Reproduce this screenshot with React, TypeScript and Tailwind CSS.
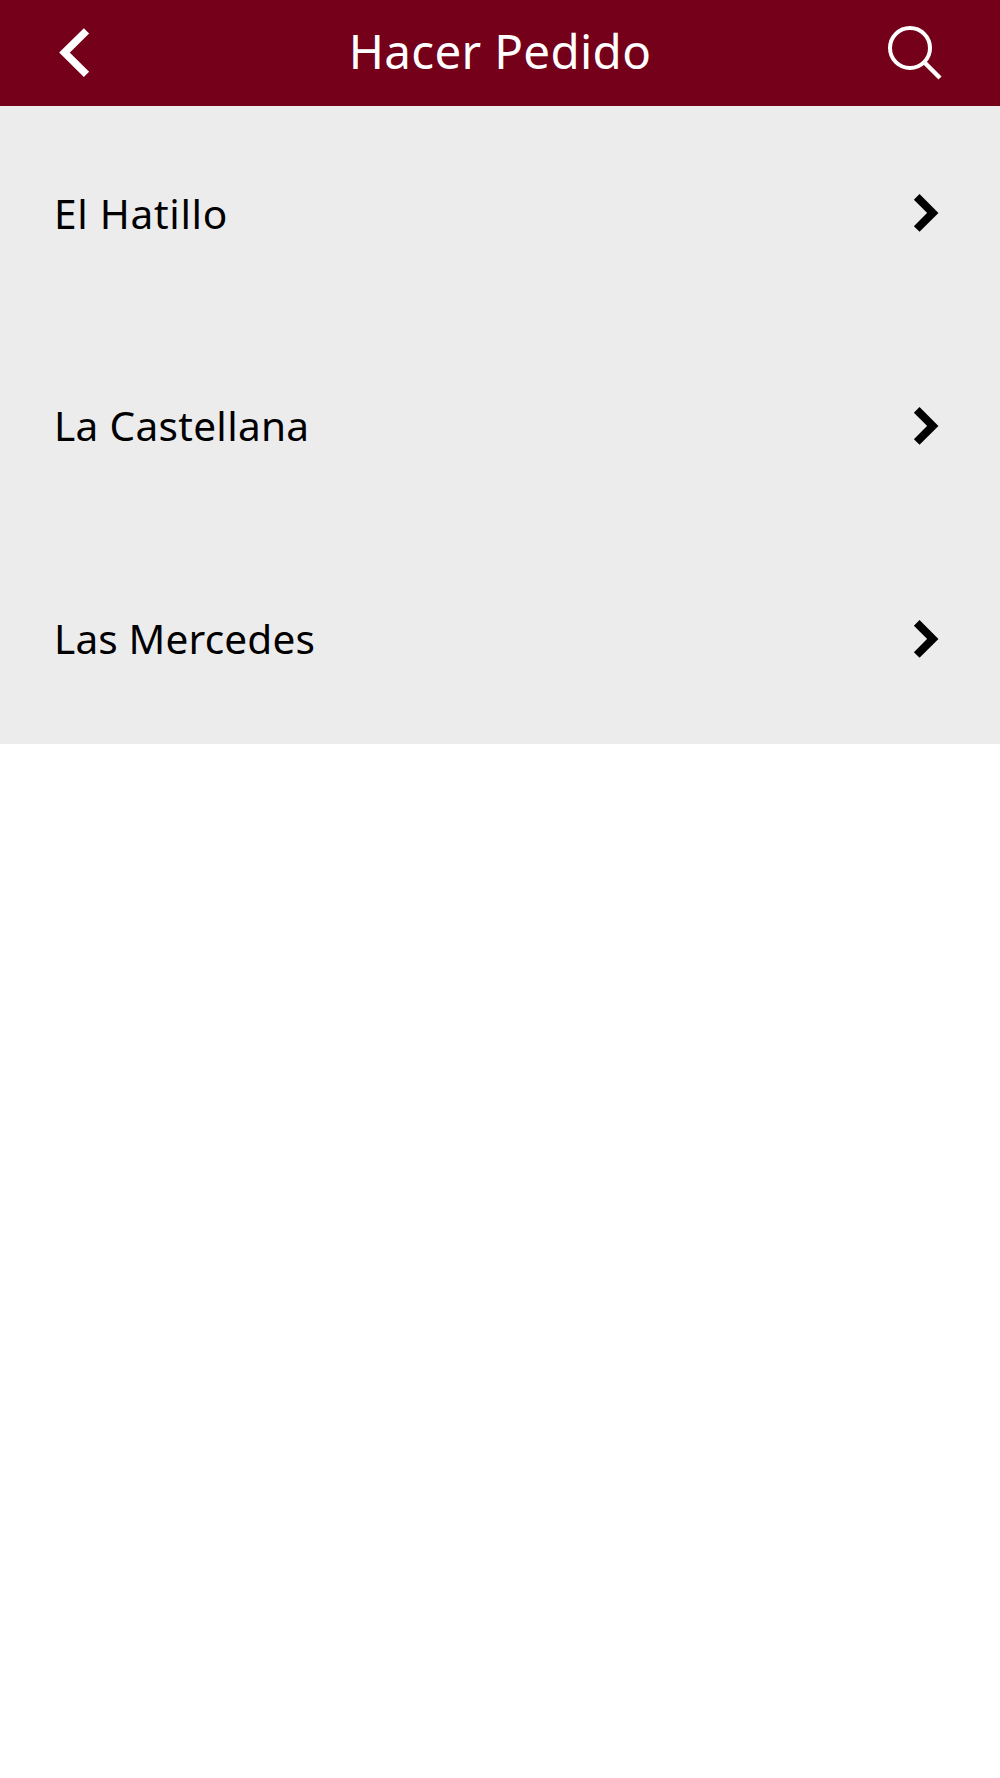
const stores = [
  { name: 'El Hatillo', tracking: 'tracking-[0.7px]' },
  { name: 'La Castellana', tracking: 'tracking-[0.3px]' },
  { name: 'Las Mercedes', tracking: 'tracking-[0.15px]' },
];

function BackIcon() {
  return (
    <svg width="36" height="52" viewBox="0 0 36 52" fill="none" stroke="white" strokeWidth="7.5">
      <path d="M31.5 3.8 9.5 25.6 31.5 47.3" />
    </svg>
  );
}

function SearchIcon() {
  return (
    <svg width="58" height="58" viewBox="0 0 58 58" fill="none" stroke="white" strokeWidth="4">
      <circle cx="25" cy="24" r="20" />
      <path d="M39 38 55 54" strokeWidth="4.4" />
    </svg>
  );
}

function ChevronIcon() {
  return (
    <svg width="30" height="42" viewBox="0 0 30 42" fill="none" stroke="black" strokeWidth="8">
      <path d="M6.7 5.8 22.8 21.9 6.7 38" />
    </svg>
  );
}

export default function App() {
  return (
    <div className="min-h-screen bg-white font-['Noto_Sans',sans-serif]">
      <header className="flex h-[106px] items-center justify-between bg-[#75001a] pl-[55px] pr-[57px]">
        <button className="w-[58px]" aria-label="Volver">
          <BackIcon />
        </button>
        <h1 className="pb-[5px] pl-[2px] text-[47.6px] leading-none tracking-[0.3px] text-white">Hacer Pedido</h1>
        <button aria-label="Buscar">
          <SearchIcon />
        </button>
      </header>

      <ul className="grid h-[638px] grid-rows-3 bg-[#ececec] text-black">
        {stores.map(({ name, tracking }) => (
          <li key={name} className="flex items-center justify-between pl-[54px] pr-[60px]">
            <span className={`pt-[3px] text-[40.6px] leading-none ${tracking}`}>{name}</span>
            <ChevronIcon />
          </li>
        ))}
      </ul>
    </div>
  );
}
